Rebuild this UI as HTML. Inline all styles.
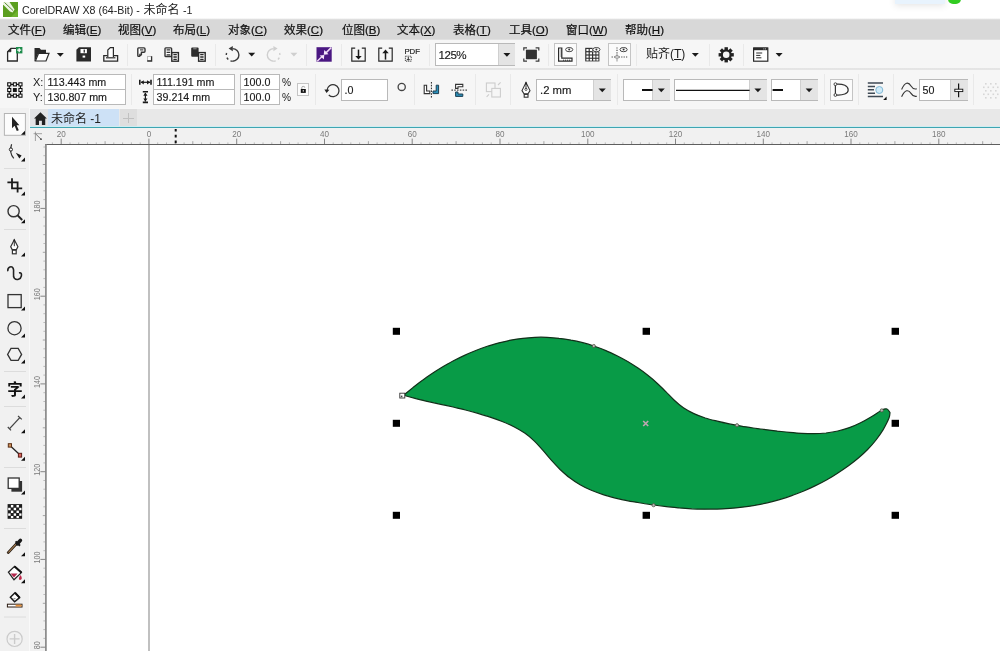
<!DOCTYPE html>
<html lang="zh">
<head>
<meta charset="utf-8">
<title>CorelDRAW X8</title>
<style>
html,body{margin:0;padding:0;}
body{width:1000px;height:651px;overflow:hidden;position:relative;background:#fff;
 font-family:"Liberation Sans","Noto Sans CJK SC",sans-serif;color:#1a1a1a;}
#root{position:absolute;left:0;top:0;width:1000px;height:651px;overflow:hidden;will-change:transform;}
.abs{position:absolute;}
#title{left:0;top:0;width:1000px;height:19px;background:#fff;}
#title .t{position:absolute;left:21.5px;top:2.4px;font-size:11.6px;line-height:16px;white-space:nowrap;color:#222;}
#title .t b{font-weight:normal;font-size:12px;}
#menu{left:0;top:19px;width:1000px;height:21px;background:linear-gradient(#e6e6e6 0,#d8d8d8 1px,#d8d8d8 20.2px,#eeeeee 21px);}
#mgrad{left:0;top:17.6px;width:1000px;height:1.8px;background:linear-gradient(#fff,#ececec);}
#menu span{position:absolute;top:2.6px;font-size:11.5px;line-height:16px;white-space:nowrap;color:#111;-webkit-text-stroke:0.22px #111;}
u{text-decoration:underline;text-underline-offset:1px;}
#tb1{left:0;top:40px;width:1000px;height:29px;background:#f6f6f6;}
#tb2{left:0;top:68px;width:1000px;height:40px;background:linear-gradient(#ebebeb 0,#dedede 1px,#ececec 2px,#f6f6f6 2.2px);}
#tabs{left:0;top:108px;width:1000px;height:19px;background:#e8e8e8;}
#tabline{left:30px;top:125.6px;width:970px;height:2.8px;background:linear-gradient(#d9f1f4 0,#c5e9ee 45%,#3fa5b2 52%,#3fa5b2 100%);}
#toolbox{left:0;top:108px;width:30.4px;height:543px;background:#f1f1f1;border-right:1.4px solid #f9f9f9;box-sizing:border-box;}
#hruler{left:30px;top:128px;width:970px;height:16px;background:#f1f1f1;}
#vruler{left:30px;top:128px;width:16px;height:523px;background:#f1f1f1;}
#canvas{left:45px;top:144px;width:955px;height:507px;background:#fff;border-top:1px solid #5e5e5e;box-sizing:border-box;}
.inp{position:absolute;background:#fff;border:1px solid #b9b9b9;box-sizing:border-box;font-size:10.7px;line-height:13px;color:#1a1a1a;white-space:nowrap;-webkit-text-stroke:0.15px #1a1a1a;}
.inp .tx{position:absolute;left:2.6px;top:1px;}
.dd{position:absolute;background:#e4e4e4;border-left:1px solid #cfcfcf;}
.tog{position:absolute;background:#fbfbfb;border:1px solid #c4c4c4;box-sizing:border-box;}
.sep{position:absolute;width:1px;background:#e9e9e9;}
.lbl{position:absolute;font-size:11px;line-height:13px;color:#1a1a1a;white-space:nowrap;}
.rl{font-family:"Liberation Sans",sans-serif;font-size:8.7px;fill:#7a7a7a;}
</style>
</head>
<body>
<div id="root">
<div id="title" class="abs">
 <svg class="abs" style="left:3px;top:2px" width="15" height="15" viewBox="0 0 15 15">
  <rect x="0" y="0" width="15" height="15" fill="#5b9e1f"/>
  <path d="M0 0 L6.5 0 L11.5 7.5 L9.5 10.5 L7 9.5 L0 2.5 Z" fill="#eef6e4"/>
  <path d="M1.5 0.5 L10 8.5" stroke="#4a7f22" stroke-width="0.9" fill="none"/>
  <path d="M15 15 L15 8 L8 15 Z" fill="#6fb32e"/>
 </svg>
 <div class="t" style="transform:scaleX(0.917);transform-origin:0 0;">CorelDRAW X8 (64-Bit) -&nbsp;</div>
 <div class="t" style="left:143.4px;font-size:12px;top:2.4px">未命名 <span style="font-size:11.6px;display:inline-block;transform:scaleX(0.92);transform-origin:0 50%">-1</span></div>
 <div class="abs" style="left:895px;top:-6px;width:50px;height:9.6px;background:#e8f3fd;box-shadow:0 2px 7px rgba(0,0,0,0.10);"></div>
 <div class="abs" style="left:948px;top:-9px;width:13px;height:13px;border-radius:5px;background:#33cc22;"></div>
</div>
<div id="mgrad" class="abs"></div>
<div id="menu" class="abs">
 <span style="left:8px">文件(<u>F</u>)</span>
 <span style="left:63px">编辑(<u>E</u>)</span>
 <span style="left:118px">视图(<u>V</u>)</span>
 <span style="left:173px">布局(<u>L</u>)</span>
 <span style="left:228px">对象(<u>C</u>)</span>
 <span style="left:284px">效果(<u>C</u>)</span>
 <span style="left:342px">位图(<u>B</u>)</span>
 <span style="left:397px">文本(<u>X</u>)</span>
 <span style="left:453px">表格(<u>T</u>)</span>
 <span style="left:509px">工具(<u>O</u>)</span>
 <span style="left:566px">窗口(<u>W</u>)</span>
 <span style="left:625px">帮助(<u>H</u>)</span>
</div>
<div id="tb1" class="abs"></div>
<div id="tb2" class="abs"></div>
<!-- separators row 1 -->
<div class="sep" style="left:127px;top:44px;height:22px"></div>
<div class="sep" style="left:215px;top:44px;height:22px"></div>
<div class="sep" style="left:306px;top:44px;height:22px"></div>
<div class="sep" style="left:341px;top:44px;height:22px"></div>
<div class="sep" style="left:429px;top:44px;height:22px"></div>
<div class="sep" style="left:548px;top:44px;height:22px"></div>
<div class="sep" style="left:636px;top:44px;height:22px"></div>
<div class="sep" style="left:709px;top:44px;height:22px"></div>
<div class="sep" style="left:743px;top:44px;height:22px"></div>
<!-- separators row 2 -->
<div class="sep" style="left:131px;top:74px;height:31px"></div>
<div class="sep" style="left:315px;top:74px;height:31px"></div>
<div class="sep" style="left:414px;top:74px;height:31px"></div>
<div class="sep" style="left:475px;top:74px;height:31px"></div>
<div class="sep" style="left:510px;top:74px;height:31px"></div>
<div class="sep" style="left:617px;top:74px;height:31px"></div>
<div class="sep" style="left:824px;top:74px;height:31px"></div>
<div class="sep" style="left:858px;top:74px;height:31px"></div>
<div class="sep" style="left:893px;top:74px;height:31px"></div>
<div class="sep" style="left:973px;top:74px;height:31px"></div>
<!-- zoom combo -->
<div class="inp" style="left:435px;top:43px;width:80px;height:23px;"><span style="position:absolute;left:2.6px;top:3px;font-size:11.6px;line-height:15px;letter-spacing:-0.55px">125%</span><div class="dd" style="left:61.6px;top:0;width:16.4px;height:21px"></div></div>
<!-- toggle buttons -->
<div class="tog" style="left:554px;top:43px;width:23px;height:23px"></div>
<div class="tog" style="left:608px;top:43px;width:23px;height:23px"></div>
<div class="lbl" style="left:646px;top:46px;font-size:12px;line-height:16px">贴齐(<u>T</u>)</div>
<!-- property bar inputs -->
<div class="lbl" style="left:33px;top:76px">X:</div>
<div class="lbl" style="left:33px;top:91px">Y:</div>
<div class="inp" style="left:44px;top:74px;width:82px;height:16px"><span class="tx">113.443 mm</span></div>
<div class="inp" style="left:44px;top:89px;width:82px;height:16px"><span class="tx">130.807 mm</span></div>
<div class="inp" style="left:153px;top:74px;width:82px;height:16px"><span class="tx">111.191 mm</span></div>
<div class="inp" style="left:153px;top:89px;width:82px;height:16px"><span class="tx">39.214 mm</span></div>
<div class="inp" style="left:240px;top:74px;width:40px;height:16px"><span class="tx">100.0</span></div>
<div class="inp" style="left:240px;top:89px;width:40px;height:16px"><span class="tx">100.0</span></div>
<div class="lbl" style="left:282px;top:76px;font-size:10.2px">%</div>
<div class="lbl" style="left:282px;top:91px;font-size:10.2px">%</div>
<div class="tog" style="left:297px;top:83px;width:12px;height:13px"></div>
<div class="inp" style="left:341px;top:79px;width:47px;height:22px"><span class="tx" style="top:4px">.0</span></div>
<div class="inp" style="left:536px;top:79px;width:75px;height:22px"><span class="tx" style="top:4px;font-size:11.3px;left:3px">.2 mm</span><div class="dd" style="left:55.8px;top:0;width:17.2px;height:20px"></div></div>
<div class="inp" style="left:622.6px;top:79px;width:47.2px;height:22px"><div class="dd" style="left:28.4px;top:0;width:17px;height:20px"></div></div>
<div class="inp" style="left:673.8px;top:79px;width:93.2px;height:22px"><div class="dd" style="left:74px;top:0;width:17.2px;height:20px"></div></div>
<div class="inp" style="left:771px;top:79px;width:47px;height:22px"><div class="dd" style="left:28.4px;top:0;width:16.6px;height:20px"></div></div>
<div class="tog" style="left:830px;top:79px;width:23px;height:22px"></div>
<div class="inp" style="left:919px;top:79px;width:49px;height:22px"><span class="tx" style="top:4px">50</span><div class="dd" style="left:30px;top:0;width:17px;height:20px"></div></div>

<svg class="abs" style="left:0;top:40px" width="1000" height="68" viewBox="0 40 1000 68" fill="none" stroke-linejoin="miter">
<defs>
 <path id="dda" d="M0 0 h7 l-3.5 3.8 z"/>
 <g id="eye"><ellipse cx="0" cy="0" rx="3.6" ry="2.1" fill="#fff" stroke="#333" stroke-width="0.9"/><circle cx="0" cy="0" r="1" fill="#333"/></g>
</defs>
<!-- new doc -->
<path d="M11 48.3 H17.3 V61 H7.6 V51.8 Z" fill="#fff" stroke="#2a2a2a" stroke-width="1.3"/>
<path d="M11 48.3 V51.8 H7.6 Z" fill="#2a2a2a" stroke="#2a2a2a" stroke-width="0.6"/>
<rect x="16" y="47" width="6.4" height="6.4" fill="#1e8c4c"/>
<path d="M17.2 50.2 h4 M19.2 48.2 v4" stroke="#fff" stroke-width="1.3"/>
<!-- open -->
<path d="M34.5 48 H39.5 L41 49.8 H46 V53 H38.3 L35 61 H34.5 Z" fill="#2a2a2a"/>
<path d="M38.6 53.3 H49 L46 61 H35.4 Z" fill="#fff" stroke="#2a2a2a" stroke-width="1.2"/>
<use href="#dda" x="56.8" y="53" fill="#1a1a1a"/>
<!-- save -->
<path d="M79 47.2 H91 V61.6 H76.4 V49.8 Z" fill="#2a2a2a"/>
<rect x="80.5" y="49" width="6.4" height="4.2" fill="#fff"/>
<rect x="83.6" y="49.6" width="1.3" height="3" fill="#2a2a2a"/>
<rect x="82.6" y="55.6" width="2.6" height="2" fill="#fff"/>
<!-- print -->
<path d="M107.8 57 V50 L110.3 47.6 H113.4 V57" fill="#fff" stroke="#2a2a2a" stroke-width="1.2"/>
<path d="M107.5 55.6 H103.8 V61.2 H117.6 V55.6 H113.6" stroke="#2a2a2a" stroke-width="1.3"/>
<path d="M106 57.8 H115.4" stroke="#2a2a2a" stroke-width="1.2"/>
<!-- cut -->
<path d="M138.6 47.9 H144 Q145 47.9 145 48.9 V51.2 Q145 52.2 144 52.2 H141.4 V54.6 L139.4 56.4 H138.6 Q137.8 56.4 137.8 55.6 V48.7 Q137.8 47.9 138.6 47.9 Z" fill="#fff" stroke="#333" stroke-width="1.4"/>
<path d="M140 49.9 H143.4" stroke="#333" stroke-width="1.1"/>
<path d="M139.4 56 V54.2 H141" stroke="#333" stroke-width="0.9"/>
<rect x="147.6" y="56.4" width="3.8" height="4.4" fill="#fff" stroke="#b0b0b0" stroke-width="0.9"/>
<path d="M147.2 61 H151.6 V56.2" stroke="#333" stroke-width="1.3"/>
<!-- copy -->
<rect x="165" y="47.9" width="6.6" height="8.6" rx="0.8" fill="#fff" stroke="#333" stroke-width="1.4"/>
<path d="M166.6 49.9 h3.6 M166.6 52.4 h3.6 M166.6 54.9 h3.6" stroke="#333" stroke-width="1.2"/>
<rect x="171.8" y="52.6" width="6.6" height="8.6" fill="#fff" stroke="#2a2a2a" stroke-width="1.4"/>
<path d="M173.4 54.7 h3.4 M173.4 57 h3.4 M173.4 59.3 h3.4" stroke="#2a2a2a" stroke-width="1.3"/>
<!-- paste -->
<rect x="191.2" y="47.4" width="7.4" height="9.4" rx="1" fill="#2e2e2e"/>
<rect x="193.2" y="48.2" width="3.4" height="1.1" fill="#8a8a8a"/>
<rect x="198.6" y="52.6" width="6.6" height="8.6" fill="#fff" stroke="#2a2a2a" stroke-width="1.4"/>
<path d="M200.2 54.7 h3.4 M200.2 57 h3.4 M200.2 59.3 h3.4" stroke="#2a2a2a" stroke-width="1.3"/>
<!-- undo -->
<path d="M232.6 48.6 A6.3 6.3 0 0 1 232.6 61.2" stroke="#3a3a3a" stroke-width="1.4"/>
<path d="M232.6 61.2 A6.3 6.3 0 0 1 226.6 53" stroke="#3a3a3a" stroke-width="1.4" stroke-dasharray="2.2 2.6"/>
<path d="M228.6 48.6 L232.8 46 V51.2 Z" fill="#3a3a3a"/>
<use href="#dda" x="248.2" y="52.8" fill="#1a1a1a"/>
<!-- redo (disabled) -->
<path d="M273.6 48.6 A6.3 6.3 0 0 0 273.6 61.2" stroke="#cfcfcf" stroke-width="1.4"/>
<path d="M273.6 61.2 A6.3 6.3 0 0 0 279.6 53" stroke="#cfcfcf" stroke-width="1.4" stroke-dasharray="2.2 2.6"/>
<path d="M277.6 48.6 L273.4 46 V51.2 Z" fill="#cfcfcf"/>
<use href="#dda" x="290.4" y="52.8" fill="#cfcfcf"/>
<!-- purple -->
<rect x="316.5" y="47.2" width="15.2" height="14.5" fill="#4a1782"/>
<path d="M331.2 47.6 L326.2 52.6 M317.2 61.2 L321.8 56.8" stroke="#ecd3f4" stroke-width="1.5"/>
<path d="M323.7 54.7 L324.3 49.9 L328.5 54.2 Z M324.3 54.9 L319.7 55.4 L323.8 59.5 Z" fill="#f4e6f9"/>
<!-- import -->
<path d="M355.2 48.2 H351.8 V61.2 H365.2 V48.2 H361.8" stroke="#2a2a2a" stroke-width="1.2"/>
<path d="M358.5 49.6 V58" stroke="#1a1a1a" stroke-width="1.5"/>
<path d="M355.3 56 H361.7 L358.5 59.6 Z" fill="#1a1a1a"/>
<!-- export -->
<path d="M382.2 48.2 H378.8 V61.2 H392.2 V48.2 H388.8" stroke="#2a2a2a" stroke-width="1.2"/>
<path d="M385.5 51.4 V59.6" stroke="#1a1a1a" stroke-width="1.5"/>
<path d="M382.3 53.2 H388.7 L385.5 49.6 Z" fill="#1a1a1a"/>
<!-- pdf -->
<text x="404.4" y="54" font-family="Liberation Sans, sans-serif" font-size="8" fill="#222" stroke="#222" stroke-width="0.2" textLength="15.6" lengthAdjust="spacingAndGlyphs">PDF</text>
<rect x="405.4" y="56.2" width="5.8" height="5" stroke="#333" stroke-width="0.9" stroke-dasharray="1.3 0.8"/>
<path d="M408.3 57 v3.4 M406.8 59.6 h3" stroke="#333" stroke-width="1"/>
<!-- zoom dd arrow -->
<use href="#dda" x="503.4" y="53" fill="#1a1a1a"/>
<!-- fullscreen -->
<path d="M523.8 50.4 V47.8 H527 M535.6 47.8 H538.8 V50.4 M538.8 58.6 V61.2 H535.6 M527 61.2 H523.8 V58.6" stroke="#3a3a3a" stroke-width="1.2"/>
<rect x="525.9" y="49.7" width="11" height="9.5" fill="#333"/>
<!-- rulers -->
<path d="M558.6 48 H561.8 V58.2 H572 V61.2 H558.6 Z" fill="#fff" stroke="#2a2a2a" stroke-width="1.2"/>
<path d="M560.4 50 h1.4 M560.4 52 h1.4 M560.4 54 h1.4 M560.4 56 h1.4 M563.6 59.6 v1.4 M565.6 59.6 v1.4 M567.6 59.6 v1.4 M569.6 59.6 v1.4" stroke="#2a2a2a" stroke-width="0.8"/>
<use href="#eye" x="569.2" y="49.6"/>
<!-- grid -->
<rect x="585.2" y="47.8" width="14.2" height="13.6" fill="#333"/>
<g fill="#fff">
<rect x="586.4" y="49" width="2.2" height="2.1"/><rect x="589.8" y="49" width="2.2" height="2.1"/>
<rect x="586.4" y="52.3" width="2.2" height="2.1"/><rect x="589.8" y="52.3" width="2.2" height="2.1"/><rect x="593.2" y="52.3" width="2.2" height="2.1"/><rect x="596.4" y="52.3" width="2" height="2.1"/>
<rect x="586.4" y="55.6" width="2.2" height="2.1"/><rect x="589.8" y="55.6" width="2.2" height="2.1"/><rect x="593.2" y="55.6" width="2.2" height="2.1"/><rect x="596.4" y="55.6" width="2" height="2.1"/>
<rect x="586.4" y="58.8" width="2.2" height="1.8"/><rect x="589.8" y="58.8" width="2.2" height="1.8"/><rect x="593.2" y="58.8" width="2.2" height="1.8"/><rect x="596.4" y="58.8" width="2" height="1.8"/>
</g>
<rect x="592.6" y="47" width="7.6" height="4.8" fill="#f6f6f6"/>
<use href="#eye" x="596.4" y="49.6"/>
<!-- guides -->
<path d="M617 47.4 V62" stroke="#444" stroke-width="1.1" stroke-dasharray="1.2 1.2"/>
<path d="M611.6 57 H627.6" stroke="#444" stroke-width="1.1" stroke-dasharray="1.2 1.2"/>
<rect x="615.8" y="55.8" width="2.4" height="2.4" fill="#ddd" stroke="#777" stroke-width="0.6"/>
<use href="#eye" x="623.6" y="49.6"/>
<!-- snap arrow -->
<use href="#dda" x="691.8" y="53" fill="#1a1a1a"/>
<!-- gear -->
<g transform="translate(726.2 54.8)">
 <g fill="#222">
  <rect x="-1.7" y="-7.6" width="3.4" height="15.2"/>
  <rect x="-1.7" y="-7.6" width="3.4" height="15.2" transform="rotate(45)"/>
  <rect x="-1.7" y="-7.6" width="3.4" height="15.2" transform="rotate(90)"/>
  <rect x="-1.7" y="-7.6" width="3.4" height="15.2" transform="rotate(135)"/>
 </g>
 <circle r="5.5" fill="#222"/><circle r="3.3" fill="#f6f6f6"/>
</g>
<!-- window -->
<rect x="753.6" y="48" width="14.2" height="13.2" fill="#fff" stroke="#2a2a2a" stroke-width="1.2"/>
<rect x="753.6" y="47.6" width="14.2" height="2.6" fill="#2a2a2a"/>
<path d="M763.4 48.9 h0.9 M765 48.9 h0.9" stroke="#fff" stroke-width="0.8"/>
<path d="M756.2 53 h6 M756.2 55.4 h4.2 M756.2 57.8 h5.2" stroke="#2a2a2a" stroke-width="1"/>
<use href="#dda" x="775.6" y="53" fill="#1a1a1a"/>

<!-- ===== property bar ===== -->
<!-- origin -->
<path d="M9.25 84.35 H20.45 V95.65 H9.25 Z" stroke="#111" stroke-width="1.1"/>
<g fill="#fff" stroke="#111" stroke-width="1.1">
<rect x="7.7" y="82.8" width="3.1" height="3.1"/><rect x="13.3" y="82.8" width="3.1" height="3.1"/><rect x="18.9" y="82.8" width="3.1" height="3.1"/>
<rect x="7.7" y="88.45" width="3.1" height="3.1"/><rect x="18.9" y="88.45" width="3.1" height="3.1"/>
<rect x="7.7" y="94.1" width="3.1" height="3.1"/><rect x="13.3" y="94.1" width="3.1" height="3.1"/><rect x="18.9" y="94.1" width="3.1" height="3.1"/>
</g>
<rect x="12.9" y="88.05" width="3.9" height="3.9" fill="#111"/>
<!-- W icon -->
<path d="M139.8 79.8 V84.8 M151 79.8 V84.8" stroke="#1a1a1a" stroke-width="1.6"/>
<path d="M141 82.3 H150" stroke="#1a1a1a" stroke-width="1.2"/>
<path d="M140.6 82.3 L143.8 80.2 V84.4 Z M150.2 82.3 L147 80.2 V84.4 Z" fill="#1a1a1a"/>
<!-- H icon -->
<path d="M142.8 91.8 H148 M142.8 102.4 H148" stroke="#1a1a1a" stroke-width="1.6"/>
<path d="M145.4 93 V101.4" stroke="#1a1a1a" stroke-width="1.2"/>
<path d="M145.4 92.6 L143.3 95.8 H147.5 Z M145.4 101.6 L143.3 98.4 H147.5 Z" fill="#1a1a1a"/>
<!-- lock -->
<rect x="300.8" y="89" width="5" height="3.9" fill="#111"/>
<rect x="302.7" y="90.2" width="1.2" height="1.3" fill="#fff"/>
<path d="M301.8 89 V87.6 Q301.8 86.4 303.3 86.4 Q304.8 86.4 304.8 87.6" stroke="#999" stroke-width="0.9"/>
<!-- rotate -->
<path d="M327 90.4 A6 6 0 1 1 328.8 95" stroke="#333" stroke-width="1.3"/>
<path d="M324.4 89.4 L329.4 89.8 L326.6 93 Z" fill="#222"/>
<!-- degree -->
<circle cx="401.7" cy="86.9" r="3.6" stroke="#444" stroke-width="1.3"/>
<!-- mirror H -->
<path d="M424.2 85.2 H426.6 V91 H429.8 V93.6 H424.2 Z" fill="#fff" stroke="#333" stroke-width="1.1"/>
<path d="M431.4 82 V97.6" stroke="#222" stroke-width="1" stroke-dasharray="1.6 1.2"/>
<path d="M438.6 85.2 H436.2 V91 H433 V93.6 H438.6 Z" fill="#2b8fb8" stroke="#1d3f52" stroke-width="1"/>
<!-- mirror V -->
<path d="M455.6 84.4 H462.8 V86.8 H458 V88.4 H455.6 Z" fill="#fff" stroke="#333" stroke-width="1.1"/>
<path d="M451.4 90.1 H467" stroke="#222" stroke-width="1" stroke-dasharray="1.6 1.2"/>
<path d="M455.6 96.4 H462.8 V94 H458 V92 H455.6 Z" fill="#2b8fb8" stroke="#1d3f52" stroke-width="1"/>
<!-- gray squares -->
<rect x="486.4" y="83" width="8.6" height="8.6" stroke="#cdcdcd" stroke-width="1.1"/>
<rect x="491.8" y="88.4" width="8.6" height="8.6" fill="#f6f6f6" stroke="#cdcdcd" stroke-width="1.1"/>
<path d="M498 85 L500.6 82.4 M486.6 96.8 L489 94.4" stroke="#cdcdcd" stroke-width="1.1"/>
<!-- nib -->
<path d="M526 82.6 L530 90.6 L528 93.8 H524 L522 90.6 Z" fill="#fff" stroke="#333" stroke-width="1.1"/>
<path d="M526 83 V89" stroke="#333" stroke-width="1"/>
<path d="M525 82.4 h2 v2 h-2z" fill="#222"/>
<circle cx="526" cy="89.4" r="1.1" stroke="#333" stroke-width="0.8"/>
<rect x="524.2" y="94.4" width="3.8" height="2.8" fill="#fff" stroke="#333" stroke-width="1.1"/>
<!-- dd arrows property bar -->
<use href="#dda" x="598.8" y="88.4" fill="#1a1a1a"/>
<use href="#dda" x="657.8" y="88.4" fill="#1a1a1a"/>
<use href="#dda" x="754.4" y="88.4" fill="#1a1a1a"/>
<use href="#dda" x="805.6" y="88.4" fill="#1a1a1a"/>
<path d="M642 90 H652.6" stroke="#111" stroke-width="2"/>
<path d="M676 90.4 H749.6" stroke="#111" stroke-width="1.1"/>
<path d="M772.6 90 H783" stroke="#111" stroke-width="2"/>
<!-- close curve -->
<path d="M835.4 84.4 V94.8 M835.4 84.2 C843.4 83.4 848.2 86 848.2 89.9 C848.2 93.6 843.4 95.6 835.4 95" stroke="#333" stroke-width="1.2"/>
<circle cx="835.4" cy="84.2" r="1.4" fill="#fff" stroke="#333" stroke-width="0.9"/>
<circle cx="835.4" cy="95" r="1.4" fill="#fff" stroke="#333" stroke-width="0.9"/>
<!-- wrap -->
<path d="M867.8 83 H883 M867.8 86.4 H875 M867.8 89.8 H874 M867.8 93.2 H875 M867.8 96.6 H883" stroke="#3f4a55" stroke-width="1.5"/>
<circle cx="879.3" cy="90" r="3.5" fill="#cfeaf8" stroke="#7fb9d6" stroke-width="1"/>
<path d="M886.6 96.6 V100 H883.2 Z" fill="#111"/>
<!-- smooth -->
<path d="M901.6 89.4 C905 82 908.4 81.6 911 86 C912.6 88.6 914.4 89.6 916.8 88.8" stroke="#333" stroke-width="1.1"/>
<path d="M901.6 96.8 C905 89.6 908.4 89.2 911 93.4 C912.6 96 914.4 96.8 916.8 96.2" stroke="#333" stroke-width="1.1"/>
<!-- slider -->
<path d="M958.6 83.4 V97.2" stroke="#111" stroke-width="1.2"/>
<rect x="954.8" y="89.2" width="8" height="2.4" fill="#fff" stroke="#111" stroke-width="0.9"/>
<!-- disabled dotted -->
<g fill="#d6d6d6">
<rect x="985" y="83" width="1.6" height="1.6"/><rect x="990" y="83" width="1.6" height="1.6"/><rect x="995" y="83" width="1.6" height="1.6"/>
<rect x="983" y="86.5" width="1.6" height="1.6"/><rect x="987.5" y="86.5" width="1.6" height="1.6"/><rect x="992.5" y="86.5" width="1.6" height="1.6"/><rect x="997" y="86.5" width="1.6" height="1.6"/>
<rect x="985" y="90" width="1.6" height="1.6"/><rect x="990" y="90" width="1.6" height="1.6"/><rect x="995" y="90" width="1.6" height="1.6"/>
<rect x="983" y="93.5" width="1.6" height="1.6"/><rect x="987.5" y="93.5" width="1.6" height="1.6"/><rect x="992.5" y="93.5" width="1.6" height="1.6"/><rect x="997" y="93.5" width="1.6" height="1.6"/>
<rect x="985" y="97" width="1.6" height="1.6"/><rect x="990" y="97" width="1.6" height="1.6"/><rect x="995" y="97" width="1.6" height="1.6"/>
</g>
</svg>

<div id="tabs" class="abs">
 <div class="abs" style="left:0;top:0;width:1000px;height:1.3px;background:#f7f7f7;"></div>
 <div class="abs" style="left:30px;top:1px;width:18px;height:19px;background:#e2e3e5;"></div>
 <div class="abs" style="left:48px;top:1px;width:71.2px;height:19px;background:#cde1f6;"></div>
 <svg class="abs" style="left:34.2px;top:3.5px" width="12.9" height="13.5" viewBox="0 0 12.4 13.4" preserveAspectRatio="none"><path d="M6.2 0.2 L0 6.4 L1.6 6.4 L1.6 13.2 L4.8 13.2 L4.8 8.8 L7.6 8.8 L7.6 13.2 L10.8 13.2 L10.8 6.4 L12.4 6.4 Z" fill="#222"/></svg>
 <div class="abs" style="left:51px;top:3px;font-size:12px;line-height:17px;white-space:nowrap;color:#222;">未命名 -1</div>
 <div class="abs" style="left:120.4px;top:1px;width:16.4px;height:18px;background:#dedede;"></div>
 <div class="abs" style="left:123.4px;top:9.5px;width:10.4px;height:1.2px;background:#c0c0c0;"></div>
 <div class="abs" style="left:128px;top:5px;width:1.2px;height:10.4px;background:#c0c0c0;"></div>
</div>
<div id="tabline" class="abs"></div>
<div id="hruler" class="abs"></div>
<div id="vruler" class="abs"></div>
<div id="canvas" class="abs"></div>
<svg class="abs" style="left:0;top:128px" width="1000" height="523" viewBox="0 128 1000 523" fill="none">
<!-- ruler corner -->
<path d="M33.6 133.7 H42 M35.4 131.6 V141" stroke="#a2a2a2" stroke-width="1"/><path d="M35.4 133.7 L41 139.2" stroke="#6e6e6e" stroke-width="1"/><circle cx="41" cy="139.2" r="0.9" fill="#4a4a4a"/>
<path d="M52.4 142.4V144M70.0 142.4V144M78.7 142.4V144M87.5 142.4V144M96.3 142.4V144M113.8 142.4V144M122.6 142.4V144M131.4 142.4V144M140.2 142.4V144M157.7 142.4V144M166.5 142.4V144M175.3 142.4V144M184.1 142.4V144M201.6 142.4V144M210.4 142.4V144M219.2 142.4V144M227.9 142.4V144M245.5 142.4V144M254.3 142.4V144M263.0 142.4V144M271.8 142.4V144M289.4 142.4V144M298.1 142.4V144M306.9 142.4V144M315.7 142.4V144M333.2 142.4V144M342.0 142.4V144M350.8 142.4V144M359.6 142.4V144M377.1 142.4V144M385.9 142.4V144M394.7 142.4V144M403.5 142.4V144M421.0 142.4V144M429.8 142.4V144M438.6 142.4V144M447.3 142.4V144M464.9 142.4V144M473.7 142.4V144M482.4 142.4V144M491.2 142.4V144M508.8 142.4V144M517.5 142.4V144M526.3 142.4V144M535.1 142.4V144M552.6 142.4V144M561.4 142.4V144M570.2 142.4V144M579.0 142.4V144M596.5 142.4V144M605.3 142.4V144M614.1 142.4V144M622.9 142.4V144M640.4 142.4V144M649.2 142.4V144M658.0 142.4V144M666.7 142.4V144M684.3 142.4V144M693.1 142.4V144M701.8 142.4V144M710.6 142.4V144M728.2 142.4V144M736.9 142.4V144M745.7 142.4V144M754.5 142.4V144M772.0 142.4V144M780.8 142.4V144M789.6 142.4V144M798.4 142.4V144M815.9 142.4V144M824.7 142.4V144M833.5 142.4V144M842.3 142.4V144M859.8 142.4V144M868.6 142.4V144M877.4 142.4V144M886.1 142.4V144M903.7 142.4V144M912.5 142.4V144M921.2 142.4V144M930.0 142.4V144M947.6 142.4V144M956.3 142.4V144M965.1 142.4V144M973.9 142.4V144M991.4 142.4V144" stroke="#b4b4b4" stroke-width="0.9"/>
<path d="M105.1 141.2V144M192.8 141.2V144M280.6 141.2V144M368.4 141.2V144M456.1 141.2V144M543.9 141.2V144M631.6 141.2V144M719.4 141.2V144M807.1 141.2V144M894.9 141.2V144M982.7 141.2V144" stroke="#9c9c9c" stroke-width="0.9"/>
<path d="M61.2 138.6V144M148.9 138.6V144M236.7 138.6V144M324.5 138.6V144M412.2 138.6V144M500.0 138.6V144M587.8 138.6V144M675.5 138.6V144M763.3 138.6V144M851.0 138.6V144M938.8 138.6V144" stroke="#858585" stroke-width="1"/>
<text x="56.7" y="137.2" class="rl" textLength="9.0" lengthAdjust="spacingAndGlyphs">20</text>
<text x="146.7" y="137.2" class="rl" textLength="4.5" lengthAdjust="spacingAndGlyphs">0</text>
<text x="232.2" y="137.2" class="rl" textLength="9.0" lengthAdjust="spacingAndGlyphs">20</text>
<text x="320.0" y="137.2" class="rl" textLength="9.0" lengthAdjust="spacingAndGlyphs">40</text>
<text x="407.7" y="137.2" class="rl" textLength="9.0" lengthAdjust="spacingAndGlyphs">60</text>
<text x="495.5" y="137.2" class="rl" textLength="9.0" lengthAdjust="spacingAndGlyphs">80</text>
<text x="581.0" y="137.2" class="rl" textLength="13.5" lengthAdjust="spacingAndGlyphs">100</text>
<text x="668.8" y="137.2" class="rl" textLength="13.5" lengthAdjust="spacingAndGlyphs">120</text>
<text x="756.5" y="137.2" class="rl" textLength="13.5" lengthAdjust="spacingAndGlyphs">140</text>
<text x="844.3" y="137.2" class="rl" textLength="13.5" lengthAdjust="spacingAndGlyphs">160</text>
<text x="932.0" y="137.2" class="rl" textLength="13.5" lengthAdjust="spacingAndGlyphs">180</text>
<path d="M43.4 147.0H45.2M43.4 155.7H45.2M43.4 173.3H45.2M43.4 182.1H45.2M43.4 190.8H45.2M43.4 199.6H45.2M43.4 217.2H45.2M43.4 226.0H45.2M43.4 234.7H45.2M43.4 243.5H45.2M43.4 261.1H45.2M43.4 269.8H45.2M43.4 278.6H45.2M43.4 287.4H45.2M43.4 304.9H45.2M43.4 313.7H45.2M43.4 322.5H45.2M43.4 331.3H45.2M43.4 348.8H45.2M43.4 357.6H45.2M43.4 366.4H45.2M43.4 375.1H45.2M43.4 392.7H45.2M43.4 401.5H45.2M43.4 410.2H45.2M43.4 419.0H45.2M43.4 436.6H45.2M43.4 445.4H45.2M43.4 454.1H45.2M43.4 462.9H45.2M43.4 480.5H45.2M43.4 489.2H45.2M43.4 498.0H45.2M43.4 506.8H45.2M43.4 524.3H45.2M43.4 533.1H45.2M43.4 541.9H45.2M43.4 550.7H45.2M43.4 568.2H45.2M43.4 577.0H45.2M43.4 585.8H45.2M43.4 594.5H45.2M43.4 612.1H45.2M43.4 620.9H45.2M43.4 629.6H45.2M43.4 638.4H45.2" stroke="#b4b4b4" stroke-width="0.9"/>
<path d="M42.8 164.5H45.6M42.8 252.3H45.6M42.8 340.0H45.6M42.8 427.8H45.6M42.8 515.6H45.6M42.8 603.3H45.6" stroke="#9c9c9c" stroke-width="0.9"/>
<path d="M40.4 208.4H45.6M40.4 296.2H45.6M40.4 383.9H45.6M40.4 471.7H45.6M40.4 559.4H45.6M40.4 647.2H45.6" stroke="#858585" stroke-width="1"/>
<text transform="translate(39.7 212.5) rotate(-90)" class="rl" textLength="12.1" lengthAdjust="spacingAndGlyphs">180</text>
<text transform="translate(39.7 300.2) rotate(-90)" class="rl" textLength="12.1" lengthAdjust="spacingAndGlyphs">160</text>
<text transform="translate(39.7 388.0) rotate(-90)" class="rl" textLength="12.1" lengthAdjust="spacingAndGlyphs">140</text>
<text transform="translate(39.7 475.7) rotate(-90)" class="rl" textLength="12.1" lengthAdjust="spacingAndGlyphs">120</text>
<text transform="translate(39.7 563.5) rotate(-90)" class="rl" textLength="12.1" lengthAdjust="spacingAndGlyphs">100</text>
<text transform="translate(39.7 649.2) rotate(-90)" class="rl" textLength="8.1" lengthAdjust="spacingAndGlyphs">80</text>
<!-- cursor marker -->
<path d="M175.7 129 V143.6" stroke="#111" stroke-width="2" stroke-dasharray="2.6 3.2"/>
<path d="M45.9 144 V651" stroke="#828282" stroke-width="1.6"/>
<!-- page edge -->
<path d="M149 145 V651" stroke="#c0c0c0" stroke-width="2"/>
<!-- leaf -->
<path d="M403.6 395.2C405.2 393.9 409.8 390.1 412.9 387.6C416.1 385.1 419.2 382.6 422.5 380.3C425.7 377.9 429.1 375.6 432.5 373.3C435.8 371.1 439.3 368.9 442.8 366.8C446.3 364.7 449.9 362.7 453.5 360.8C457.1 358.9 460.8 357.1 464.5 355.4C468.2 353.6 472.0 352.0 475.8 350.5C479.6 349.0 483.5 347.6 487.3 346.3C491.2 345.0 495.1 343.9 499.0 342.8C503.0 341.8 506.9 340.9 510.9 340.1C514.9 339.4 518.9 338.8 522.9 338.3C526.9 337.8 530.9 337.5 534.9 337.3C538.9 337.2 543.0 337.2 547.0 337.3C551.0 337.5 555.0 337.8 559.0 338.3C563.0 338.7 567.0 339.3 571.0 340.1C575.0 340.8 578.9 341.7 582.8 342.7C586.8 343.8 590.6 345.0 594.5 346.3C598.3 347.6 602.1 349.0 605.9 350.6C609.6 352.1 613.3 353.9 617.0 355.7C620.6 357.5 624.2 359.4 627.7 361.5C631.2 363.6 634.6 365.8 638.0 368.1C641.3 370.3 644.6 372.8 647.8 375.3C651.0 377.8 654.1 380.4 657.1 383.2C660.1 385.9 662.9 388.8 665.8 391.6C668.7 394.5 671.4 397.5 674.3 400.2C677.2 402.9 680.2 405.6 683.4 407.8C686.7 410.0 690.2 412.0 693.9 413.6C697.5 415.3 701.4 416.7 705.3 418.0C709.2 419.2 713.3 420.2 717.2 421.2C721.2 422.2 725.3 423.1 729.3 423.9C733.2 424.7 737.2 425.5 741.2 426.1C745.2 426.8 749.2 427.4 753.2 428.0C757.2 428.6 761.3 429.1 765.3 429.6C769.3 430.1 773.3 430.6 777.4 431.1C781.4 431.5 785.5 432.0 789.5 432.3C793.6 432.7 797.7 433.1 801.8 433.3C805.8 433.5 809.9 433.7 813.9 433.6C818.0 433.6 822.0 433.4 826.0 433.0C830.0 432.5 833.9 431.9 837.8 431.0C841.7 430.1 845.6 429.0 849.4 427.6C853.2 426.2 857.0 424.5 860.6 422.7C864.3 420.9 867.9 418.8 871.4 416.7C874.9 414.7 879.0 411.5 881.6 410.2C884.2 408.9 885.6 408.6 887.0 409.0C888.4 409.4 889.5 412.0 890.0 412.6C889.8 413.5 890.1 415.2 889.0 418.0C887.9 420.8 885.3 425.9 883.2 429.6C881.0 433.2 878.5 436.7 876.0 440.0C873.4 443.4 870.6 446.5 867.6 449.5C864.7 452.5 861.6 455.3 858.4 458.0C855.2 460.7 851.9 463.3 848.5 465.8C845.0 468.3 841.5 470.7 837.9 473.0C834.4 475.4 830.7 477.6 826.9 479.7C823.2 481.8 819.4 483.8 815.5 485.6C811.7 487.5 807.7 489.3 803.8 491.0C799.8 492.6 795.8 494.2 791.8 495.6C787.7 497.1 783.6 498.4 779.6 499.6C775.5 500.8 771.3 501.9 767.2 502.8C763.1 503.8 758.9 504.6 754.8 505.4C750.6 506.1 746.5 506.7 742.3 507.2C738.1 507.7 734.0 508.1 729.8 508.4C725.6 508.7 721.4 509.0 717.2 509.1C713.0 509.2 708.7 509.2 704.5 509.2C700.3 509.1 696.1 509.0 691.8 508.8C687.6 508.5 683.4 508.2 679.1 507.9C674.9 507.5 670.6 507.1 666.4 506.6C662.1 506.1 657.9 505.6 653.6 505.0C649.4 504.4 645.1 503.7 640.8 503.0C636.6 502.3 632.3 501.6 628.1 500.8C623.8 500.0 619.6 499.1 615.4 498.1C611.3 497.0 607.2 495.9 603.1 494.6C599.1 493.3 595.1 491.9 591.3 490.3C587.4 488.6 583.7 486.8 580.1 484.7C576.5 482.7 573.0 480.4 569.7 477.8C566.3 475.3 563.2 472.4 560.1 469.5C557.1 466.5 554.2 463.3 551.3 460.1C548.5 457.0 545.8 453.6 543.0 450.4C540.1 447.2 537.4 444.0 534.4 441.1C531.3 438.2 528.2 435.5 524.7 433.1C521.3 430.7 517.7 428.6 513.9 426.7C510.1 424.7 506.2 423.1 502.2 421.5C498.2 419.9 494.2 418.5 490.1 417.1C486.1 415.7 482.0 414.5 477.9 413.3C473.8 412.1 469.6 411.0 465.5 410.0C461.4 408.9 457.2 408.0 453.1 407.0C449.0 406.1 444.8 405.2 440.7 404.3C436.5 403.4 432.4 402.5 428.3 401.6C424.1 400.7 420.0 399.7 415.9 398.7C411.8 397.6 405.6 395.8 403.6 395.2Z" fill="#089b47" stroke="#12301a" stroke-width="1.2"/>
<!-- nodes -->
<rect x="399.8" y="393.2" width="5" height="4.8" fill="#fff" stroke="#333" stroke-width="0.9"/>
<rect x="400.8" y="395.6" width="1.6" height="1.6" fill="#444"/>
<g fill="#b5b5b5" stroke="#4a4a3a" stroke-width="0.7">
<circle cx="593.8" cy="346" r="1.6"/><circle cx="737" cy="425.2" r="1.6"/><circle cx="881.8" cy="410.4" r="1.6"/><circle cx="653.6" cy="505.2" r="1.6"/>
</g>
<!-- center mark -->
<path d="M643.2 421 L648.2 426 M648.2 421 L643.2 426" stroke="#bfa5b1" stroke-width="1.7"/>
<!-- handles -->
<g fill="#000">
<rect x="392.8" y="327.8" width="7.2" height="7"/><rect x="642.6" y="327.8" width="7.4" height="7"/><rect x="891.6" y="327.8" width="7.4" height="7"/>
<rect x="392.8" y="419.8" width="7.2" height="7"/><rect x="891.6" y="419.8" width="7.4" height="7"/>
<rect x="392.8" y="511.8" width="7.2" height="7"/><rect x="642.6" y="511.8" width="7.4" height="7"/><rect x="891.6" y="511.8" width="7.4" height="7"/>
</g>
</svg>
<div id="toolbox" class="abs"></div>
<svg class="abs" style="left:0;top:108px" width="30" height="543" viewBox="0 108 30 543" fill="none">
<defs><path id="fly" d="M4 0 V4 H0 Z" fill="#111"/></defs>
<!-- pick (active) -->
<rect x="4.4" y="113.5" width="21" height="21.8" fill="#fcfcfc" stroke="#b4b4b4" stroke-width="1"/>
<path d="M12 116.8 V128.2 L14.6 125.8 L16.8 131 L18.8 130.2 L16.6 125.2 L19.4 125.2 Z" fill="#222"/>
<use href="#fly" x="21" y="130.8"/>
<!-- shape tool -->
<path d="M11.6 144.2 C9.6 150 10.6 154.6 13.8 158.4" stroke="#333" stroke-width="1.2"/>
<circle cx="10.9" cy="149.5" r="1.6" fill="#fff" stroke="#222" stroke-width="1"/>
<path d="M15.8 152.8 L21.6 155.6 L19.4 158.6 Z" fill="#1a1a1a"/>
<use href="#fly" x="21" y="157.6"/>
<path d="M4 168.5 H26" stroke="#dcdcdc" stroke-width="1"/>
<!-- crop -->
<path d="M12 178.2 V188.4 H22.2 M7.4 182.4 H17.6 V192.6" stroke="#1a1a1a" stroke-width="1.8"/>
<use href="#fly" x="21" y="191.6"/>
<!-- zoom -->
<circle cx="13.6" cy="211.2" r="5.6" stroke="#333" stroke-width="1.4"/>
<path d="M17.6 215.4 L22.2 220" stroke="#222" stroke-width="2"/>
<use href="#fly" x="21" y="219.2"/>
<path d="M4 229.5 H26" stroke="#dcdcdc" stroke-width="1"/>
<!-- freehand nib -->
<path d="M14.3 239.8 L17.9 246.8 L16.4 249.6 H12.2 L10.7 246.8 Z" fill="#fff" stroke="#333" stroke-width="1.2"/>
<path d="M14.3 240.6 V246.2" stroke="#333" stroke-width="1"/>
<path d="M13.6 239.4 h1.4 v1.6 h-1.4z" fill="#222"/>
<rect x="12.4" y="250.2" width="3.8" height="3.6" fill="#fff" stroke="#333" stroke-width="1.2"/>
<use href="#fly" x="21" y="252.6"/>
<!-- artistic media -->
<path d="M7.8 270.6 C7.6 267 11.8 265.4 13.2 268.4 C14.6 271.4 12.2 275.6 14.4 278.2 C16.6 280.6 20.8 279.4 21.4 275.8 C21.8 273.6 20.6 272.4 19.6 272.8" stroke="#222" stroke-width="1.6" stroke-linecap="round"/>
<!-- rectangle -->
<rect x="8" y="294.6" width="13.2" height="13" stroke="#333" stroke-width="1.3"/>
<use href="#fly" x="21" y="306.4"/>
<!-- ellipse -->
<circle cx="14.5" cy="328.2" r="6.6" stroke="#333" stroke-width="1.3"/>
<use href="#fly" x="21" y="333.4"/>
<!-- polygon -->
<path d="M11 348.4 H18.2 L21.6 354.4 L18.2 360.4 H11 L7.6 354.4 Z" stroke="#333" stroke-width="1.3"/>
<use href="#fly" x="21" y="359.6"/>
<path d="M4 371.5 H26" stroke="#dcdcdc" stroke-width="1"/>
<!-- text -->
<text x="7.2" y="395.2" font-family="Liberation Sans, Noto Sans CJK SC, sans-serif" font-size="15.5" font-weight="bold" fill="#111">字</text>
<use href="#fly" x="21" y="394.6"/>
<path d="M4 406.5 H26" stroke="#dcdcdc" stroke-width="1"/>
<!-- dimension -->
<path d="M9.6 428.6 L19.8 417.6" stroke="#444" stroke-width="1.3"/>
<path d="M7.8 427 L11 430.4 M18 416 L21.8 419.4" stroke="#444" stroke-width="1.2"/>
<use href="#fly" x="21" y="429.2"/>
<!-- connector -->
<path d="M11 446.6 L19 454" stroke="#222" stroke-width="1.3"/>
<rect x="8.3" y="443.7" width="3.2" height="3.4" fill="#d0935a" stroke="#5a3018" stroke-width="1"/>
<rect x="18.4" y="453.3" width="3.2" height="3.8" fill="#d9625a" stroke="#5a2018" stroke-width="1"/>
<use href="#fly" x="21" y="456.8"/>
<path d="M4 467.5 H26" stroke="#dcdcdc" stroke-width="1"/>
<!-- drop shadow -->
<path d="M11.4 481 H22.1 V491.7 H11.4 Z" fill="#333"/>
<rect x="8.2" y="478" width="11" height="10.4" fill="#fff" stroke="#333" stroke-width="1.3"/>
<use href="#fly" x="21" y="490.6"/>
<!-- transparency -->
<rect x="7.6" y="504.1" width="14.5" height="14.7" fill="#1c1c1c"/>
<g fill="#fff">
<rect x="10.9" y="505" width="2.4" height="2.4"/><rect x="16.5" y="505" width="2.4" height="2.4"/>
<rect x="8.2" y="507.8" width="2.4" height="2.4"/><rect x="13.7" y="507.8" width="2.4" height="2.4"/><rect x="19.2" y="507.8" width="2.3" height="2.4"/>
<rect x="10.9" y="510.6" width="2.4" height="2.4"/><rect x="16.5" y="510.6" width="2.4" height="2.4"/>
<rect x="8.2" y="513.4" width="2.4" height="2.4"/><rect x="13.7" y="513.4" width="2.4" height="2.4"/><rect x="19.2" y="513.4" width="2.3" height="2.4"/>
<rect x="10.9" y="516" width="2.4" height="2.1"/><rect x="16.5" y="516" width="2.4" height="2.1"/>
</g>
<path d="M4 528.5 H26" stroke="#dcdcdc" stroke-width="1"/>
<!-- eyedropper -->
<path d="M8.2 552.6 L16.8 543.4" stroke="#33261a" stroke-width="2.8" stroke-linecap="round"/>
<path d="M8.6 552.2 L16.2 544" stroke="#d9a468" stroke-width="0.9" stroke-linecap="round"/>
<path d="M15.6 541.4 L20 545.8" stroke="#1a1a1a" stroke-width="2"/>
<path d="M17.4 543.8 L20.4 540.4" stroke="#1a1a1a" stroke-width="3.6" stroke-linecap="round"/>
<use href="#fly" x="21" y="552.2"/>
<!-- interactive fill -->
<path d="M8.4 572.2 L14.6 566.4 L21.4 572.6 L14 579.8 Z" fill="#fff" stroke="#222" stroke-width="1.3"/>
<path d="M14.6 566.4 L21.4 572.6" stroke="#111" stroke-width="2"/>
<path d="M10.6 573.6 H17.6 L14 577.6 Z" fill="#b3264c"/>
<path d="M20.6 575 Q22.6 578 21.2 579.6 Q19.6 580.6 18.8 579 Q18.6 577.4 20.6 575Z" fill="#c0264a"/>
<use href="#fly" x="21" y="579.2"/>
<!-- outline -->
<path d="M10.4 597.2 L15 592.8 L19.6 597.6 L14.6 601.8 Z" fill="#fff" stroke="#1a1a1a" stroke-width="1.5"/>
<path d="M15 592.8 L19.6 597.6" stroke="#111" stroke-width="2"/>
<path d="M13 598 h3 l-1.5 1.6z" fill="#999"/>
<rect x="7.4" y="604.2" width="14.6" height="2.8" fill="#fff" stroke="#2a1a10" stroke-width="1"/>
<rect x="15.6" y="604.7" width="6" height="1.8" fill="#e8913a"/>
<path d="M4 617 H26" stroke="#dcdcdc" stroke-width="1"/>
<!-- plus -->
<circle cx="14.6" cy="638.9" r="7.6" stroke="#cbcbcb" stroke-width="1.2"/>
<path d="M9.6 638.9 H19.6 M14.6 633.9 V643.9" stroke="#cbcbcb" stroke-width="1.4"/>
</svg>

</div>
</body>
</html>
